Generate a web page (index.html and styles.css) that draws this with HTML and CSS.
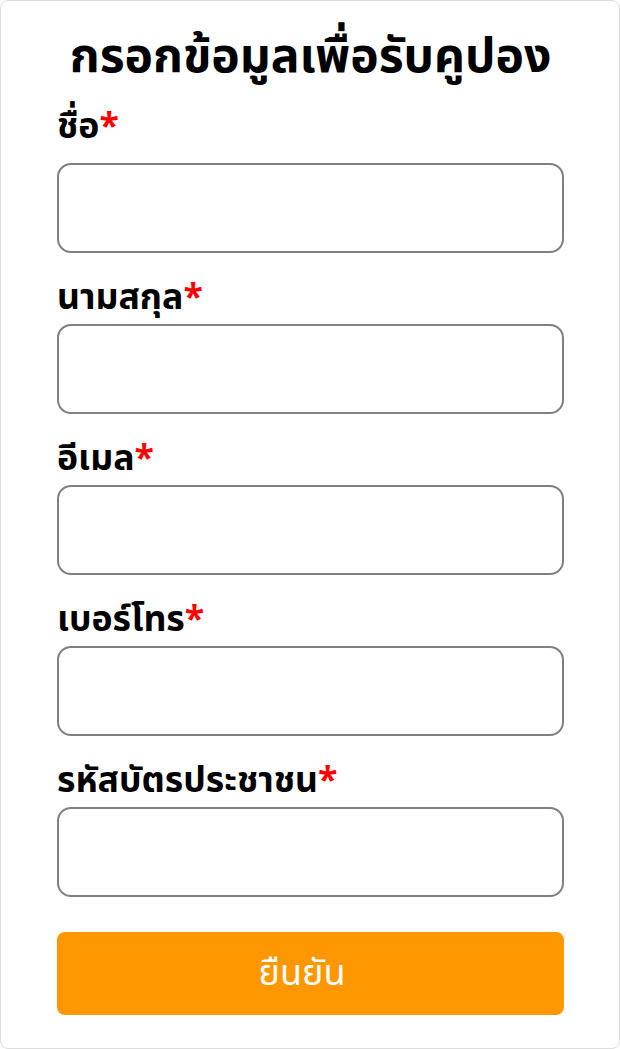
FILE: index.html
```html
<!DOCTYPE html>
<html lang="th">
<head>
<meta charset="utf-8">
<link rel="stylesheet" href="styles.css">
</head>
<body>
<div class="card">
  <h1 class="title">กรอกข้อมูลเพื่อรับคูปอง</h1>
  <div class="field field-first">
    <label class="label">ชื่อ<span class="req">*</span></label>
    <div class="input"></div>
  </div>
  <div class="field">
    <label class="label">นามสกุล<span class="req">*</span></label>
    <div class="input"></div>
  </div>
  <div class="field">
    <label class="label">อีเมล<span class="req">*</span></label>
    <div class="input"></div>
  </div>
  <div class="field">
    <label class="label">เบอร์โทร<span class="req">*</span></label>
    <div class="input"></div>
  </div>
  <div class="field">
    <label class="label">รหัสบัตรประชาชน<span class="req">*</span></label>
    <div class="input"></div>
  </div>
  <div class="button">ยืนยัน</div>
</div>
</body>
</html>
```
FILE: styles.css
```css
html, body {
  margin: 0;
  padding: 0;
  background: #ffffff;
}
body {
  font-family: "Noto Sans Thai", "Noto Sans", sans-serif;
  color: #000;
}
.card {
  box-sizing: border-box;
  width: 620px;
  height: 1049px;
  border: 1px solid #dddddd;
  border-radius: 8px;
  padding: 27px 55px 0 56px;
  display: flex;
  flex-direction: column;
}
.title {
  margin: 0;
  font-size: 48px;
  font-weight: 700;
  text-align: center;
  line-height: 60px;
}
.field {
  display: flex;
  flex-direction: column;
}
.label {
  font-size: 35.6px;
  font-weight: 700;
  line-height: 52px;
  margin-top: 19px;
}
.field-first .label {
  margin-top: 13px;
  margin-bottom: 10px;
}
.req {
  color: #ff0000;
}
.input {
  box-sizing: border-box;
  height: 90px;
  border: 2px solid #808080;
  border-radius: 14px;
}
.button {
  box-sizing: border-box;
  margin-top: 35px;
  height: 83px;
  padding-right: 17px;
  border-radius: 8px;
  background: #ff9800;
  color: #fff;
  font-size: 36px;
  display: flex;
  align-items: center;
  justify-content: center;
}
```
